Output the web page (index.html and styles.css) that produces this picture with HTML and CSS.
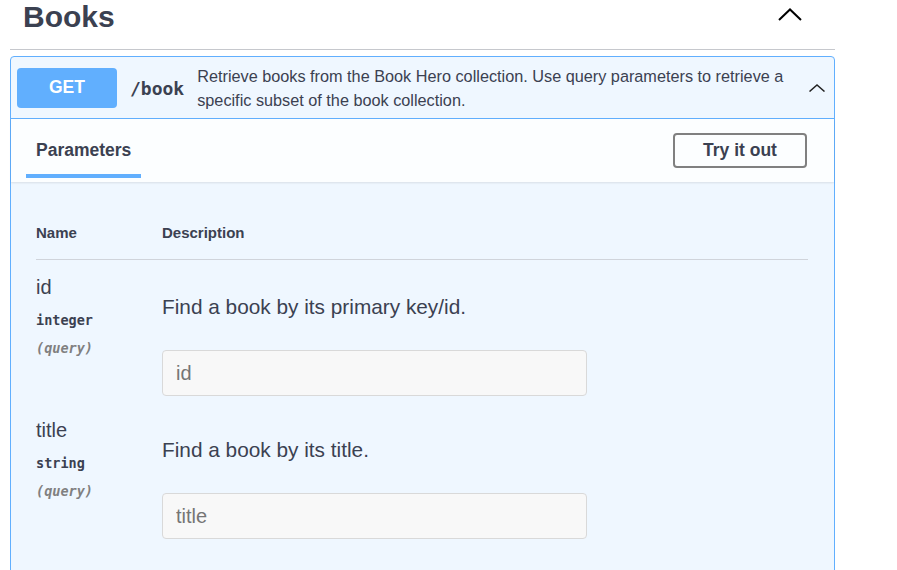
FILE: index.html
```html
<!DOCTYPE html>
<html lang="en">
<head>
<meta charset="utf-8">
<title>Books</title>
<link rel="stylesheet" href="styles.css">
</head>
<body>
<div class="wrap">
  <div class="tag-header">
    <h3 class="tag-title">Books</h3>
    <svg class="tag-chevron" width="24" height="13" viewBox="0 0 24 13"><polyline points="1,12 12,1.5 23,12" fill="none" stroke="#000" stroke-width="2"/></svg>
  </div>

  <div class="opblock">
    <div class="summary">
      <span class="method">GET</span>
      <span class="path">/book</span>
      <div class="summary-desc">Retrieve books from the Book Hero collection. Use query parameters to retrieve a specific subset of the book collection.</div>
      <svg class="summary-chevron" width="16" height="8" viewBox="0 0 16 8"><polyline points="0.5,7.5 8,1 15.5,7.5" fill="none" stroke="#222" stroke-width="1.5"/></svg>
    </div>

    <div class="section-header">
      <div class="tab">Parameters</div>
      <button class="try-out">Try it out</button>
    </div>

    <div class="params">
      <div class="params-head">
        <div class="col-name">Name</div>
        <div class="col-desc">Description</div>
      </div>

      <div class="param-row">
        <div class="col-name">
          <div class="param-name">id</div>
          <div class="param-type">integer</div>
          <div class="param-in">(query)</div>
        </div>
        <div class="col-desc">
          <div class="param-desc">Find a book by its primary key/id.</div>
          <input class="param-input" type="text" placeholder="id">
        </div>
      </div>

      <div class="param-row">
        <div class="col-name">
          <div class="param-name">title</div>
          <div class="param-type">string</div>
          <div class="param-in">(query)</div>
        </div>
        <div class="col-desc">
          <div class="param-desc">Find a book by its title.</div>
          <input class="param-input" type="text" placeholder="title">
        </div>
      </div>
    </div>
  </div>
</div>
</body>
</html>
```

FILE: styles.css
```css
* { box-sizing: border-box; }

html, body {
  margin: 0;
  padding: 0;
  background: #ffffff;
  font-family: "Liberation Sans", Arial, sans-serif;
  color: #3b4151;
}

.wrap {
  width: 825px;
  margin-left: 10px;
}

.tag-header {
  display: flex;
  justify-content: space-between;
  align-items: flex-start;
  padding: 0 33px 15px 13px;
  border-bottom: 1px solid #c6c8cd;
}

.tag-title {
  margin: 0;
  font-size: 30px;
  line-height: 34px;
  font-weight: 700;
  color: #3b4151;
}

.tag-chevron {
  margin-top: 8px;
}

.opblock {
  margin-top: 6px;
  border: 1px solid #61affe;
  border-radius: 4px;
  background: #eff7ff;
  min-height: 600px;
}

.summary {
  display: flex;
  align-items: center;
  height: 62px;
  padding: 1px 9px 0 6px;
  border-bottom: 1px solid #61affe;
}

.method {
  flex: none;
  width: 100px;
  height: 40px;
  border-radius: 4px;
  background: #61affe;
  color: #ffffff;
  font-weight: 700;
  font-size: 17.5px;
  display: flex;
  align-items: center;
  justify-content: center;
  margin-top: -1px;
}

.path {
  flex: none;
  margin-left: 13px;
  font-family: "DejaVu Sans Mono", monospace;
  font-weight: 700;
  font-size: 18px;
  color: #3b4151;
}

.summary-desc {
  flex: 1;
  margin-left: 13px;
  padding-right: 10px;
  font-size: 16.25px;
  line-height: 24px;
  color: #3b4151;
}

.summary-chevron {
  flex: none;
}

.section-header {
  display: flex;
  justify-content: space-between;
  align-items: center;
  height: 63px;
  padding: 0 27px 0 15px;
  background: rgba(255, 255, 255, 0.8);
  box-shadow: 0 1px 2px rgba(0, 0, 0, 0.1);
}

.tab {
  align-self: flex-start;
  height: 59px;
  width: 115px;
  padding: 7px 10px 0;
  border-bottom: 4px solid #61affe;
  display: flex;
  align-items: center;
  font-size: 17.5px;
  font-weight: 700;
  color: #3b4151;
}

.try-out {
  width: 134px;
  height: 35px;
  border: 2px solid #808080;
  border-radius: 4px;
  background: transparent;
  font-family: "Liberation Sans", Arial, sans-serif;
  font-size: 17.5px;
  font-weight: 700;
  color: #3b4151;
  padding: 0;
}

.params {
  padding: 0 26px 0 25px;
}

.params-head {
  display: flex;
  padding: 42px 0 17px;
  border-bottom: 1px solid #d0d4db;
  font-size: 15px;
  line-height: 18px;
  font-weight: 700;
}

.col-name {
  flex: none;
  width: 126px;
}

.col-desc {
  flex: 1;
}

.param-row {
  display: flex;
  padding: 14.5px 0 7px;
}

.param-name {
  font-size: 20px;
  line-height: 24px;
  color: #3b4151;
}

.param-type {
  margin-top: 11px;
  font-family: "DejaVu Sans Mono", monospace;
  font-weight: 700;
  font-size: 13.5px;
  line-height: 20px;
  color: #3b4151;
}

.param-in {
  margin-top: 8px;
  font-family: "DejaVu Sans Mono", monospace;
  font-style: italic;
  font-weight: 700;
  font-size: 13.5px;
  line-height: 20px;
  color: #808080;
}

.param-desc {
  margin-top: 20.5px;
  font-size: 20.8px;
  line-height: 24px;
  color: #3b4151;
}

.param-input {
  display: block;
  margin-top: 31px;
  width: 425px;
  height: 46px;
  padding: 0 13px;
  border: 1px solid #d9d9d9;
  border-radius: 4px;
  background: #f8f8f8;
  font-family: "Liberation Sans", Arial, sans-serif;
  font-size: 20px;
  color: #3b4151;
  outline: none;
}

.param-input::placeholder {
  color: #757575;
}
```
